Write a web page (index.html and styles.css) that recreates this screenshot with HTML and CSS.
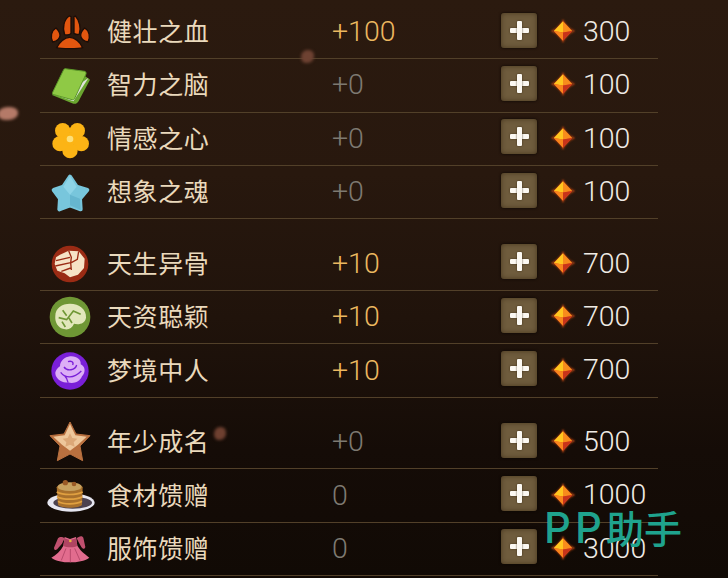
FILE: index.html
```html
<!doctype html>
<html lang="zh-CN">
  <head>
    <meta charset="UTF-8" />
    <title>属性加点</title>
    <link rel="stylesheet" href="styles.css">
  </head>
  <body>
    <svg class="defs" width="0" height="0">
      <defs>
        <symbol id="gem" viewBox="0 0 66 66">
          <path d="M33 0 L41 20 L66 33 L41 46 L33 66 L25 46 L0 33 L25 20 Z" fill="#7a3212" />
          <path d="M33 6 L58 33 L33 60 L8 33 Z" fill="#e8501a" />
          <path d="M33 6 L8 33 L33 37 Z" fill="#ffc71f" />
          <path d="M33 6 L58 33 L33 37 Z" fill="#f78c1c" />
          <path d="M8 33 L33 37 L33 60 Z" fill="#f9851d" />
          <path d="M33 37 L58 33 L33 60 Z" fill="#c8341a" />
        </symbol>
      </defs>
    </svg>

    <div class="page">
      <div class="group">
        <div class="row">
          <svg class="icon" viewBox="0 0 132 132">
            <g fill="#e2560f" stroke="#1c0d07" stroke-width="4">
              <path d="M26 113 C34 96 50 82 65 82 C80 82 97 96 104 113 C92 117 38 117 26 113 Z" />
              <path d="M24 54 C10 62 6 80 14 96 C24 94 36 88 36 76 C36 66 30 60 24 54 Z" />
              <path d="M64 18 C48 28 42 54 50 74 C58 76 66 74 69 70 L69 20 Z" />
              <path d="M78 20 L78 70 C84 74 90 74 94 72 C100 54 94 30 82 18 Z" />
              <path d="M110 54 C124 62 128 80 120 96 C110 94 98 88 98 76 C98 66 104 60 110 54 Z" />
            </g>
          </svg>
          <span class="name">健壮之血</span>
          <span class="val gold">+100</span>
          <button class="add"></button>
          <svg class="gem"><use href="#gem" /></svg>
          <span class="cost">300</span>
        </div>
        <div class="row">
          <svg class="icon" viewBox="0 0 132 132">
            <path d="M12 96 L76 122 C84 124 88 120 92 114 L126 50 L112 40 L40 60 Z" fill="#6aa52f" />
            <path d="M16 94 L76 115 L122 44 L100 60 L40 80 Z" fill="#dfe3dc" />
            <path d="M51 17 C50 17 48 18 47 20 L14 88 C12 92 14 94 18 95 L72 110 C76 111 78 109 80 106 L114 33 C115 29 113 26 110 25 Z" fill="#8fc945" stroke="#5c9a28" stroke-width="3" />
          </svg>
          <span class="name">智力之脑</span>
          <span class="val dim">+0</span>
          <button class="add"></button>
          <svg class="gem"><use href="#gem" /></svg>
          <span class="cost">100</span>
        </div>
        <div class="row">
          <svg class="icon" viewBox="0 0 132 132">
            <g fill="#fcb415">
              <circle cx="44" cy="41" r="23" />
              <circle cx="88" cy="41" r="23" />
              <circle cx="100" cy="80" r="23" />
              <circle cx="66" cy="101" r="23" />
              <circle cx="36" cy="80" r="23" />
              <circle cx="66" cy="66" r="20" />
            </g>
            <circle cx="66" cy="66" r="10" fill="#fde07a" />
          </svg>
          <span class="name">情感之心</span>
          <span class="val dim">+0</span>
          <button class="add"></button>
          <svg class="gem"><use href="#gem" /></svg>
          <span class="cost">100</span>
        </div>
        <div class="row">
          <svg class="icon" viewBox="0 0 132 132">
            <path d="M66 20 L86 50 L118 60 L96 86 L98 118 L66 106 L34 118 L36 86 L17 60 L46 50 Z" fill="#78c6dc" stroke="#78c6dc" stroke-width="12" stroke-linejoin="round" />
            <path d="M66 18 L86 50 L66 74 L46 50 Z" fill="#8ed4e7" />
            <path d="M66 74 L96 86 L98 120 L66 106 Z" fill="#66b6cf" />
          </svg>
          <span class="name">想象之魂</span>
          <span class="val dim">+0</span>
          <button class="add"></button>
          <svg class="gem"><use href="#gem" /></svg>
          <span class="cost">100</span>
        </div>
      </div>

      <div class="group">
        <div class="row">
          <svg class="icon" viewBox="0 0 132 132">
            <circle cx="66" cy="66" r="55" fill="#9a2b14" />
            <path d="M36 38 L62 26 L92 28 L110 50 L108 78 L90 98 L66 106 L50 94 L28 86 L20 66 L24 46 Z" fill="#f6e3c6" />
            <path d="M24 56 L66 46 M22 72 L68 62 M40 88 L68 78 M62 26 L70 46 L68 62 L70 84 M92 28 L88 52 L70 62" fill="none" stroke="#9a2b14" stroke-width="4" />
          </svg>
          <span class="name">天生异骨</span>
          <span class="val gold">+10</span>
          <button class="add"></button>
          <svg class="gem"><use href="#gem" /></svg>
          <span class="cost">700</span>
        </div>
        <div class="row">
          <svg class="icon" viewBox="0 0 132 132">
            <circle cx="66" cy="66" r="61" fill="#6f9735" />
            <path d="M22 62 C22 40 42 26 66 26 C94 26 116 44 114 68 C112 86 92 90 78 86 C72 100 60 106 48 102 C30 98 20 82 22 62 Z" fill="#e2e7bb" />
            <path d="M32 68 L56 74 L76 48 L98 58 M62 68 L72 84 M44 46 L56 62 M42 80 L52 96" fill="none" stroke="#6f9735" stroke-width="5" />
          </svg>
          <span class="name">天资聪颖</span>
          <span class="val gold">+10</span>
          <button class="add"></button>
          <svg class="gem"><use href="#gem" /></svg>
          <span class="cost">700</span>
        </div>
        <div class="row">
          <svg class="icon" viewBox="0 0 132 132">
            <circle cx="66" cy="66" r="56" fill="#7a1fd8" />
            <path d="M66 22 C86 20 100 32 98 46 C112 52 114 70 102 82 C96 98 76 106 60 100 C40 104 20 86 22 70 C26 60 30 56 36 52 C36 36 50 24 66 22 Z" fill="#dcaef6" />
            <path d="M48 54 C58 68 82 64 86 48 M60 38 C70 34 78 40 74 48 M38 70 C52 88 76 90 100 66 M60 100 C58 90 56 86 50 80" fill="none" stroke="#7a1fd8" stroke-width="4" />
          </svg>
          <span class="name">梦境中人</span>
          <span class="val gold">+10</span>
          <button class="add"></button>
          <svg class="gem"><use href="#gem" /></svg>
          <span class="cost">700</span>
        </div>
      </div>

      <div class="group">
        <div class="row">
          <svg class="icon" viewBox="0 0 132 132">
            <path d="M66 6 L84 42 L126 47 L96 78 L104 122 L66 102 L28 122 L36 78 L6 47 L48 42 Z" fill="#b9703f" stroke="#b9703f" stroke-width="3" stroke-linejoin="round" />
            <path d="M66 12 L82 46 L116 50 L90 74 L66 92 L42 74 L16 50 L50 46 Z" fill="#eec79b" />
            <path d="M66 40 L73 54 L88 56 L77 67 L80 80 L66 74 L52 80 L55 67 L44 56 L59 54 Z" fill="#dca878" />
          </svg>
          <span class="name">年少成名</span>
          <span class="val dim">+0</span>
          <button class="add"></button>
          <svg class="gem"><use href="#gem" /></svg>
          <span class="cost">500</span>
        </div>
        <div class="row">
          <svg class="icon" viewBox="0 0 132 132">
            <ellipse cx="69" cy="86" rx="71" ry="27" fill="#e6e6f0" />
            <ellipse cx="74" cy="86" rx="58" ry="18" fill="#4b4250" />
            <path d="M26 40 C28 28 102 28 104 40 L102 92 C96 104 36 104 30 92 Z" fill="#a8702c" />
            <path d="M26 54 C46 64 84 64 104 54 M27 68 C46 78 84 78 103 68 M30 82 C46 92 84 92 102 82" fill="none" stroke="#e0a040" stroke-width="5" />
            <ellipse cx="65" cy="38" rx="36" ry="13" fill="#c7a15f" />
            <circle cx="52" cy="26" r="8" fill="#9a5a26" />
            <circle cx="78" cy="30" r="7" fill="#9a5a26" />
          </svg>
          <span class="name">食材馈赠</span>
          <span class="val dim">0</span>
          <button class="add"></button>
          <svg class="gem"><use href="#gem" /></svg>
          <span class="cost">1000</span>
        </div>
        <div class="row">
          <svg class="icon" viewBox="0 0 132 132">
            <path d="M50 34 C44 30 36 28 30 34 L18 62 C18 72 26 70 30 64 L42 50 Z M86 34 C92 30 100 24 106 32 L112 60 C110 68 104 66 100 60 L92 46 Z" fill="#c0506e" />
            <path d="M50 30 L66 36 L84 30 L88 56 C100 76 118 86 124 92 C110 102 88 106 66 106 C44 106 24 102 10 92 C24 84 38 72 46 56 Z" fill="#e26c8e" />
            <path d="M46 56 C54 62 80 62 88 56 L84 34 L66 40 L50 34 Z" fill="#b04462" />
            <circle cx="67" cy="42" r="4" fill="#e8b840" />
            <path d="M54 64 L40 100 M67 66 L67 106 M80 64 L96 100" fill="none" stroke="#b84a6c" stroke-width="3" />
          </svg>
          <span class="name">服饰馈赠</span>
          <span class="val dim">0</span>
          <button class="add"></button>
          <svg class="gem"><use href="#gem" /></svg>
          <span class="cost">3000</span>
        </div>
      </div>
    </div>

    <!-- drifting petals over the list -->
    <i class="petal p1"></i>
    <i class="petal p2"></i>
    <i class="petal p3"></i>

    <div class="watermark"><span class="wm-p">PP</span>助手</div>
  </body>
</html>
```

FILE: styles.css
```css
html,
body {
  margin: 0;
  height: 100%;
}
body {
  position: relative;
  overflow: hidden;
  font-family: Roboto, "Noto Sans", sans-serif;
  background: linear-gradient(180deg, #2b1a0f 0%, #28180e 30%, #20130b 55%, #150c07 78%, #110a05 100%);
}
.defs {
  position: absolute;
}
.page {
  display: flex;
  flex-direction: column;
  gap: 18.4px;
  width: 618px;
  margin-left: 40px;
  padding-top: 6px;
}
.row {
  box-sizing: border-box;
  height: 53.33px;
  padding-left: 8px;
  display: grid;
  grid-template-columns: 59px 225px 169px 50px 32px auto;
  align-items: center;
  border-bottom: 1px solid #524029;
}
.icon {
  width: 44px;
  height: 44px;
  overflow: visible;
}
.name {
  margin-bottom: 4px;
  font-family: "Noto Sans CJK SC", sans-serif;
  font-size: 25px;
  letter-spacing: 0.6px;
  color: #ead9bc;
}
.val {
  margin-bottom: 1px;
  font-size: 28.5px;
  font-weight: 300;
}
.gold {
  color: #ecb860;
}
.dim {
  color: #7e7a72;
}
.add {
  position: relative;
  width: 36px;
  height: 35px;
  margin-bottom: 4px;
  padding: 0;
  border: 0;
  border-radius: 3px;
  background: #6f5c3d;
  box-shadow: 0 0 3px #0b0603, inset 0 0 5px rgba(45, 30, 12, 0.6);
}
.add::before,
.add::after {
  content: "";
  position: absolute;
  left: 50%;
  top: 50%;
  border-radius: 1px;
  background: #fbf8f2;
  box-shadow: 0 0 2px #3a2a14;
}
.add::before {
  width: 19px;
  height: 5px;
  margin: -2.5px 0 0 -9.5px;
}
.add::after {
  width: 5px;
  height: 19px;
  margin: -9.5px 0 0 -2.5px;
}
.gem {
  width: 24px;
  height: 24px;
  margin-bottom: 2px;
  filter: drop-shadow(0 0 1px #b04010);
}
.cost {
  font-size: 28.5px;
  font-weight: 300;
  line-height: 1;
  color: #efebe5;
}
.petal {
  position: absolute;
  border-radius: 50% 40% 50% 40%;
  filter: blur(1.5px);
}
.p1 {
  left: 301px;
  top: 50px;
  width: 13px;
  height: 13px;
  background: #6e4232;
}
.p2 {
  left: -2px;
  top: 107px;
  width: 20px;
  height: 13px;
  background: #b57a68;
}
.p3 {
  left: 214px;
  top: 427px;
  width: 12px;
  height: 13px;
  background: #6e4030;
}
.watermark {
  position: absolute;
  left: 544px;
  top: 497px;
  font-family: "Noto Sans CJK SC", sans-serif;
  font-size: 38px;
  font-weight: 500;
  line-height: 60px;
  color: #1fa38e;
}
.wm-p {
  font-family: Inter, sans-serif;
  font-size: 42px;
  letter-spacing: 4px;
}
```
